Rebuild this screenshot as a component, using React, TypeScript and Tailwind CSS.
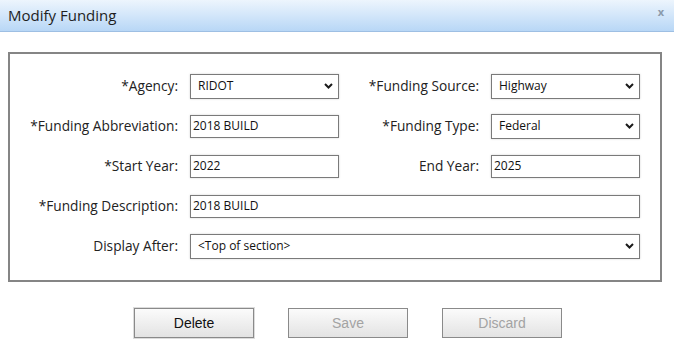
import React from "react";

const labelCls =
  "flex items-center justify-end text-[13.7px] text-[#222] whitespace-nowrap";

function Chevron() {
  return (
    <svg width="9" height="6" viewBox="0 0 9 6" className="shrink-0">
      <path
        d="M1 1 L4.5 4.5 L8 1"
        fill="none"
        stroke="#1b1b1b"
        strokeWidth="2"
      />
    </svg>
  );
}

function Select({ value, wide }: { value: string; wide?: boolean }) {
  return (
    <div className={"flex items-center " + (wide ? "col-span-3" : "")}>
      <div className="flex items-center justify-between w-full h-[25px] border border-[#7a7a7a] bg-white pl-[7px] pr-[5px] shadow-[0_0_2px_rgba(0,0,0,0.18)]">
        <span className="text-[12px] text-[#111] leading-none">{value}</span>
        <Chevron />
      </div>
    </div>
  );
}

function Input({ value, wide }: { value: string; wide?: boolean }) {
  return (
    <div className={"flex items-center " + (wide ? "col-span-3" : "")}>
      <div className="flex items-center w-full h-[23px] border border-[#7a7a7a] bg-white px-[2px] shadow-[0_0_2px_rgba(0,0,0,0.18)]">
        <span className="text-[12px] text-[#111] leading-none">{value}</span>
      </div>
    </div>
  );
}

function Label({ children }: { children: React.ReactNode }) {
  return <div className={labelCls}>{children}</div>;
}

function Button({
  children,
  disabled,
  focused,
}: {
  children: React.ReactNode;
  disabled?: boolean;
  focused?: boolean;
}) {
  return (
    <button
      className={
        "w-[120px] h-[30px] border border-[#8a8a8a] bg-gradient-to-b from-[#fbfbfb] to-[#e3e3e3] text-[14px] " +
        (disabled ? "text-[#a3a3a3] " : "text-[#111] ") +
        (focused ? "outline outline-1 outline-[#dcdcdc]" : "")
      }
      style={{ fontFamily: '"Liberation Sans", Arial, sans-serif' }}
    >
      {children}
    </button>
  );
}

export default function App() {
  return (
    <div
      className="w-[674px] h-[356px] bg-white overflow-hidden"
      style={{ fontFamily: '"Open Sans", "Noto Sans", sans-serif' }}
    >
      {/* Title bar */}
      <div className="flex items-center justify-between h-[32px] border-b border-[#9ebfe3] bg-gradient-to-b from-[#edf5fd] to-[#b8d7f6] pl-[8px] pr-[10px]">
        <span className="text-[15px] text-[#1e1e1e]">Modify Funding</span>
        <span className="text-[11px] font-bold text-[#8b9aab] -mt-[6px]">x</span>
      </div>

      {/* Form */}
      <div className="ml-[8px] mt-[20px] w-[654px] h-[230px] border-2 border-[#858585] pt-[12px]">
        <div className="grid grid-cols-[168px_149px_128px_149px] auto-rows-[40px] gap-x-3">
          <Label>*Agency:</Label>
          <Select value="RIDOT" />
          <Label>*Funding Source:</Label>
          <Select value="Highway" />

          <Label>*Funding Abbreviation:</Label>
          <Input value="2018 BUILD" />
          <Label>*Funding Type:</Label>
          <Select value="Federal" />

          <Label>*Start Year:</Label>
          <Input value="2022" />
          <Label>End Year:</Label>
          <Input value="2025" />

          <Label>*Funding Description:</Label>
          <Input value="2018 BUILD" wide />

          <Label>Display After:</Label>
          <Select value="<Top of section>" wide />
        </div>
      </div>

      {/* Buttons */}
      <div className="flex gap-[34px] pl-[134px] mt-[26px]">
        <Button focused>Delete</Button>
        <Button disabled>Save</Button>
        <Button disabled>Discard</Button>
      </div>
    </div>
  );
}
